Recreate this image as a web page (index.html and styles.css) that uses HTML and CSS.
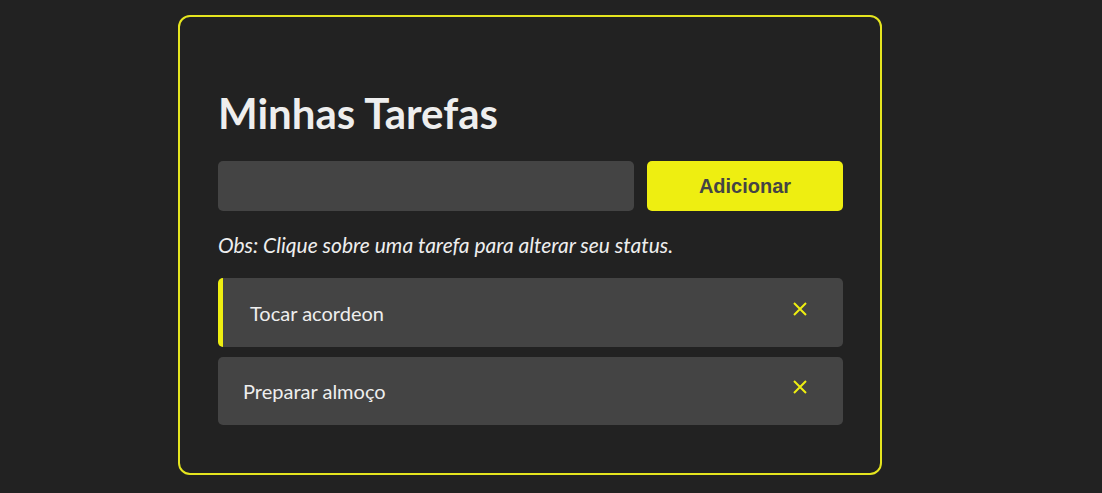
FILE: index.html
```html
<!DOCTYPE html>
<html lang="pt-BR">
<head>
<meta charset="utf-8">
<title>Minhas Tarefas</title>
<link rel="stylesheet" href="styles.css">
</head>
<body>
<main class="card">
  <h1 class="title">Minhas Tarefas</h1>
  <form class="add-form">
    <input class="add-input" type="text">
    <button class="add-btn" type="button">Adicionar</button>
  </form>
  <p class="note">Obs: Clique sobre uma tarefa para alterar seu status.</p>
  <ul class="tasks">
    <li class="task task-active">
      <span class="task-text">Tocar acordeon</span>
      <span class="task-remove"><svg width="16" height="16" viewBox="0 0 16 16"><path d="M2 2 L14 14 M14 2 L2 14" stroke="#eeee11" stroke-width="2" fill="none"/></svg></span>
    </li>
    <li class="task">
      <span class="task-text">Preparar almoço</span>
      <span class="task-remove"><svg width="16" height="16" viewBox="0 0 16 16"><path d="M2 2 L14 14 M14 2 L2 14" stroke="#eeee11" stroke-width="2" fill="none"/></svg></span>
    </li>
  </ul>
</main>
</body>
</html>
```
FILE: styles.css
```css
html, body {
  margin: 0;
  padding: 0;
  background: #222222;
}
body {
  padding-top: 15px;
  font-family: Lato, "Open Sans", sans-serif;
  color: #eeeeee;
}
.card {
  box-sizing: border-box;
  width: 704px;
  height: 460px;
  margin: 0 0 0 178px;
  border: 2px solid #e5e51f;
  border-radius: 12px;
  padding: 72px 37px 0 38px;
}
.title {
  margin: 0;
  font-size: 42px;
  font-weight: 700;
  line-height: 48px;
  color: #eeeeee;
}
.add-form {
  display: flex;
  gap: 13px;
  margin-top: 24px;
}
.add-input {
  box-sizing: border-box;
  flex: 1;
  height: 50px;
  border: none;
  border-radius: 5px;
  background: #444444;
  outline: none;
}
.add-btn {
  width: 196px;
  height: 50px;
  border: none;
  border-radius: 5px;
  background: #eeee11;
  color: #444444;
  font-family: "Liberation Sans", Arial, sans-serif;
  font-weight: 700;
  font-size: 20px;
}
.note {
  margin: 22px 0 0;
  font-style: italic;
  font-size: 21px;
  line-height: 24px;
}
.tasks {
  list-style: none;
  margin: 21px 0 0;
  padding: 0;
  display: flex;
  flex-direction: column;
  gap: 10px;
}
.task {
  display: flex;
  align-items: center;
  justify-content: space-between;
  box-sizing: border-box;
  height: 68px;
  padding: 0 35px 0 25px;
  border-radius: 5px;
  background: #444444;
  font-size: 20px;
}
.task-active {
  height: 69px;
  border-left: 5px solid #eeee11;
  padding-left: 27px;
}
.task-remove {
  display: flex;
  position: relative;
  top: -4px;
}
```
